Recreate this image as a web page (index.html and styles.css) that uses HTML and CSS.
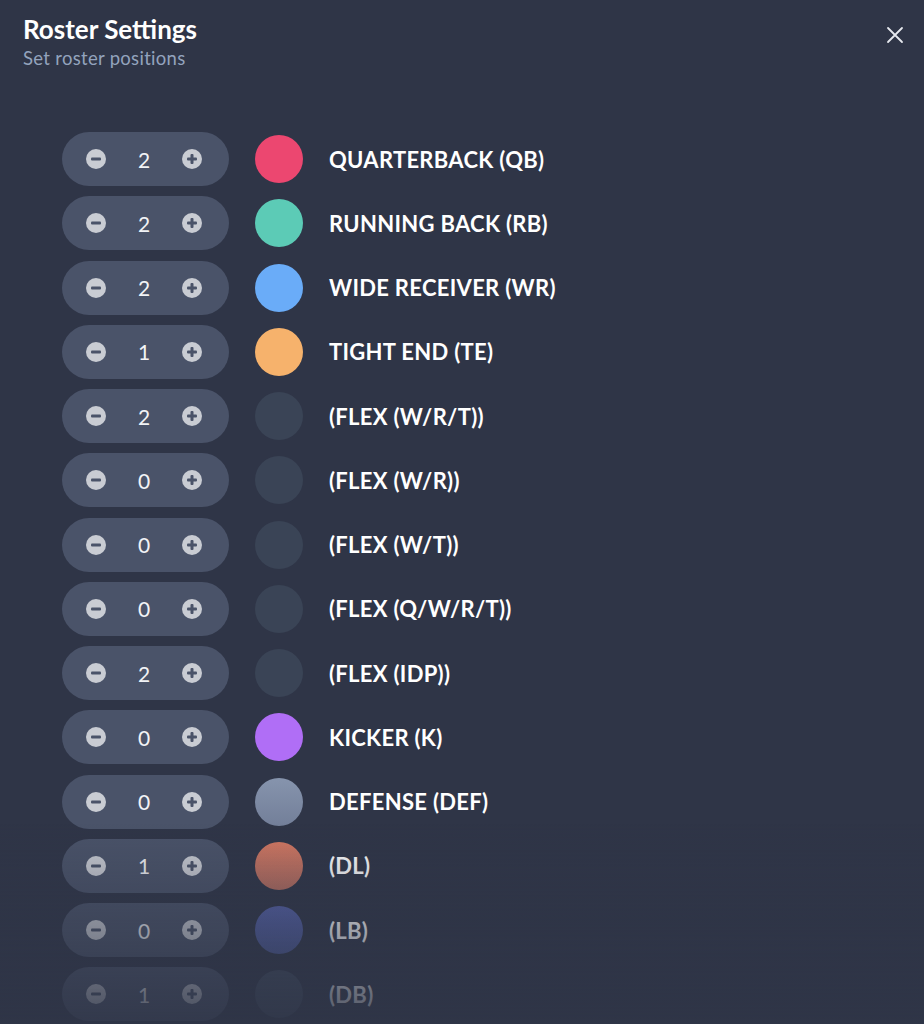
FILE: index.html
```html
<!DOCTYPE html>
<html lang="en">
<head>
  <meta charset="UTF-8" />
  <title>Roster Settings</title>
  <link rel="stylesheet" href="styles.css">
</head>
<body>
  <!-- Header -->
  <div class="header">
    <div class="titles">
      <h1>Roster Settings</h1>
      <p>Set roster positions</p>
    </div>
    <button class="close" aria-label="Close">
      <svg width="18" height="18" viewBox="0 0 18 18"><path d="M2 2L16 16M16 2L2 16" stroke="#e6e9ef" stroke-width="1.8" stroke-linecap="round"/></svg>
    </button>
  </div>

  <!-- Position list -->
  <div class="positions">
    <div class="row"><div class="stepper"><svg class="btn" viewBox="0 0 20 20"><circle cx="10" cy="10" r="10"/><rect x="5" y="8.5" width="10" height="3" rx="1"/></svg><span class="count">2</span><svg class="btn" viewBox="0 0 20 20"><circle cx="10" cy="10" r="10"/><rect x="5" y="8.5" width="10" height="3" rx="1"/><rect x="8.5" y="5" width="3" height="10" rx="1"/></svg></div><div class="dot qb"></div><div class="label">QUARTERBACK (QB)</div></div>
    <div class="row"><div class="stepper"><svg class="btn" viewBox="0 0 20 20"><circle cx="10" cy="10" r="10"/><rect x="5" y="8.5" width="10" height="3" rx="1"/></svg><span class="count">2</span><svg class="btn" viewBox="0 0 20 20"><circle cx="10" cy="10" r="10"/><rect x="5" y="8.5" width="10" height="3" rx="1"/><rect x="8.5" y="5" width="3" height="10" rx="1"/></svg></div><div class="dot rb"></div><div class="label">RUNNING BACK (RB)</div></div>
    <div class="row"><div class="stepper"><svg class="btn" viewBox="0 0 20 20"><circle cx="10" cy="10" r="10"/><rect x="5" y="8.5" width="10" height="3" rx="1"/></svg><span class="count">2</span><svg class="btn" viewBox="0 0 20 20"><circle cx="10" cy="10" r="10"/><rect x="5" y="8.5" width="10" height="3" rx="1"/><rect x="8.5" y="5" width="3" height="10" rx="1"/></svg></div><div class="dot wr"></div><div class="label">WIDE RECEIVER (WR)</div></div>
    <div class="row"><div class="stepper"><svg class="btn" viewBox="0 0 20 20"><circle cx="10" cy="10" r="10"/><rect x="5" y="8.5" width="10" height="3" rx="1"/></svg><span class="count">1</span><svg class="btn" viewBox="0 0 20 20"><circle cx="10" cy="10" r="10"/><rect x="5" y="8.5" width="10" height="3" rx="1"/><rect x="8.5" y="5" width="3" height="10" rx="1"/></svg></div><div class="dot te"></div><div class="label">TIGHT END (TE)</div></div>
    <div class="row"><div class="stepper"><svg class="btn" viewBox="0 0 20 20"><circle cx="10" cy="10" r="10"/><rect x="5" y="8.5" width="10" height="3" rx="1"/></svg><span class="count">2</span><svg class="btn" viewBox="0 0 20 20"><circle cx="10" cy="10" r="10"/><rect x="5" y="8.5" width="10" height="3" rx="1"/><rect x="8.5" y="5" width="3" height="10" rx="1"/></svg></div><div class="dot flex"></div><div class="label">(FLEX (W/R/T))</div></div>
    <div class="row"><div class="stepper"><svg class="btn" viewBox="0 0 20 20"><circle cx="10" cy="10" r="10"/><rect x="5" y="8.5" width="10" height="3" rx="1"/></svg><span class="count">0</span><svg class="btn" viewBox="0 0 20 20"><circle cx="10" cy="10" r="10"/><rect x="5" y="8.5" width="10" height="3" rx="1"/><rect x="8.5" y="5" width="3" height="10" rx="1"/></svg></div><div class="dot flex"></div><div class="label">(FLEX (W/R))</div></div>
    <div class="row"><div class="stepper"><svg class="btn" viewBox="0 0 20 20"><circle cx="10" cy="10" r="10"/><rect x="5" y="8.5" width="10" height="3" rx="1"/></svg><span class="count">0</span><svg class="btn" viewBox="0 0 20 20"><circle cx="10" cy="10" r="10"/><rect x="5" y="8.5" width="10" height="3" rx="1"/><rect x="8.5" y="5" width="3" height="10" rx="1"/></svg></div><div class="dot flex"></div><div class="label">(FLEX (W/T))</div></div>
    <div class="row"><div class="stepper"><svg class="btn" viewBox="0 0 20 20"><circle cx="10" cy="10" r="10"/><rect x="5" y="8.5" width="10" height="3" rx="1"/></svg><span class="count">0</span><svg class="btn" viewBox="0 0 20 20"><circle cx="10" cy="10" r="10"/><rect x="5" y="8.5" width="10" height="3" rx="1"/><rect x="8.5" y="5" width="3" height="10" rx="1"/></svg></div><div class="dot flex"></div><div class="label">(FLEX (Q/W/R/T))</div></div>
    <div class="row"><div class="stepper"><svg class="btn" viewBox="0 0 20 20"><circle cx="10" cy="10" r="10"/><rect x="5" y="8.5" width="10" height="3" rx="1"/></svg><span class="count">2</span><svg class="btn" viewBox="0 0 20 20"><circle cx="10" cy="10" r="10"/><rect x="5" y="8.5" width="10" height="3" rx="1"/><rect x="8.5" y="5" width="3" height="10" rx="1"/></svg></div><div class="dot flex"></div><div class="label">(FLEX (IDP))</div></div>
    <div class="row"><div class="stepper"><svg class="btn" viewBox="0 0 20 20"><circle cx="10" cy="10" r="10"/><rect x="5" y="8.5" width="10" height="3" rx="1"/></svg><span class="count">0</span><svg class="btn" viewBox="0 0 20 20"><circle cx="10" cy="10" r="10"/><rect x="5" y="8.5" width="10" height="3" rx="1"/><rect x="8.5" y="5" width="3" height="10" rx="1"/></svg></div><div class="dot k"></div><div class="label">KICKER (K)</div></div>
    <div class="row"><div class="stepper"><svg class="btn" viewBox="0 0 20 20"><circle cx="10" cy="10" r="10"/><rect x="5" y="8.5" width="10" height="3" rx="1"/></svg><span class="count">0</span><svg class="btn" viewBox="0 0 20 20"><circle cx="10" cy="10" r="10"/><rect x="5" y="8.5" width="10" height="3" rx="1"/><rect x="8.5" y="5" width="3" height="10" rx="1"/></svg></div><div class="dot def"></div><div class="label">DEFENSE (DEF)</div></div>
    <div class="row"><div class="stepper"><svg class="btn" viewBox="0 0 20 20"><circle cx="10" cy="10" r="10"/><rect x="5" y="8.5" width="10" height="3" rx="1"/></svg><span class="count">1</span><svg class="btn" viewBox="0 0 20 20"><circle cx="10" cy="10" r="10"/><rect x="5" y="8.5" width="10" height="3" rx="1"/><rect x="8.5" y="5" width="3" height="10" rx="1"/></svg></div><div class="dot dl"></div><div class="label">(DL)</div></div>
    <div class="row"><div class="stepper"><svg class="btn" viewBox="0 0 20 20"><circle cx="10" cy="10" r="10"/><rect x="5" y="8.5" width="10" height="3" rx="1"/></svg><span class="count">0</span><svg class="btn" viewBox="0 0 20 20"><circle cx="10" cy="10" r="10"/><rect x="5" y="8.5" width="10" height="3" rx="1"/><rect x="8.5" y="5" width="3" height="10" rx="1"/></svg></div><div class="dot lb"></div><div class="label">(LB)</div></div>
    <div class="row"><div class="stepper"><svg class="btn" viewBox="0 0 20 20"><circle cx="10" cy="10" r="10"/><rect x="5" y="8.5" width="10" height="3" rx="1"/></svg><span class="count">1</span><svg class="btn" viewBox="0 0 20 20"><circle cx="10" cy="10" r="10"/><rect x="5" y="8.5" width="10" height="3" rx="1"/><rect x="8.5" y="5" width="3" height="10" rx="1"/></svg></div><div class="dot db"></div><div class="label">(DB)</div></div>
  </div>

  <div class="fade"></div>
</body>
</html>
```

FILE: styles.css
```css
/* Base */
* {
  margin: 0;
  padding: 0;
  box-sizing: border-box;
}
html, body {
  height: 100%;
  background: #2f3547;
  font-family: Lato, 'Noto Sans', sans-serif;
  color: #ffffff;
  overflow: hidden;
}
/* Header */
.header {
  display: flex;
  justify-content: space-between;
  align-items: flex-start;
  padding: 12px 20px 0 23px;
}
.header h1 {
  font-size: 26px;
  font-weight: 700;
  line-height: 34px;
}
.header p {
  font-size: 18.5px;
  line-height: 24px;
  letter-spacing: 0.3px;
  color: #93a3bd;
}
.close {
  background: none;
  border: none;
  margin-top: 14px;
  cursor: pointer;
}
/* Position rows */
.positions {
  display: flex;
  flex-direction: column;
  gap: 10.25px;
  padding: 62px 0 0 62px;
}
.row {
  display: flex;
  align-items: center;
}
.stepper {
  display: flex;
  align-items: center;
  width: 167px;
  height: 54px;
  padding-left: 24px;
  border-radius: 27px;
  background: #4a5369;
}
.btn {
  width: 20px;
  height: 20px;
  fill: #c9ccd3;
}
.btn rect {
  fill: #4a5369;
}
.count {
  width: 76px;
  text-align: center;
  font-size: 21px;
  color: #f2f3f6;
}
.dot {
  width: 48px;
  height: 48px;
  margin: 0 26px;
  border-radius: 50%;
}
.dot.qb { background: #ec4770; }
.dot.rb { background: #5ccbb6; }
.dot.wr { background: #6aacf8; }
.dot.te { background: #f6b26c; }
.dot.flex { background: #3a4456; }
.dot.k { background: #b06ef6; }
.dot.def { background: linear-gradient(#8694ad, #737f99); }
.dot.dl { background: linear-gradient(#d47862, #b06c60); }
.dot.lb { background: linear-gradient(#5460a6, #4c5a96); }
.dot.db { background: #3f4a5d; }
.label {
  font-size: 22px;
  font-weight: 700;
  color: #ffffff;
  letter-spacing: 0.3px;
}
/* Fade-out at the bottom of the list */
.fade {
  position: fixed;
  left: 0;
  right: 0;
  bottom: 0;
  height: 200px;
  background: linear-gradient(rgba(47, 53, 71, 0), rgba(47, 53, 71, 0.85));
  pointer-events: none;
}
```
